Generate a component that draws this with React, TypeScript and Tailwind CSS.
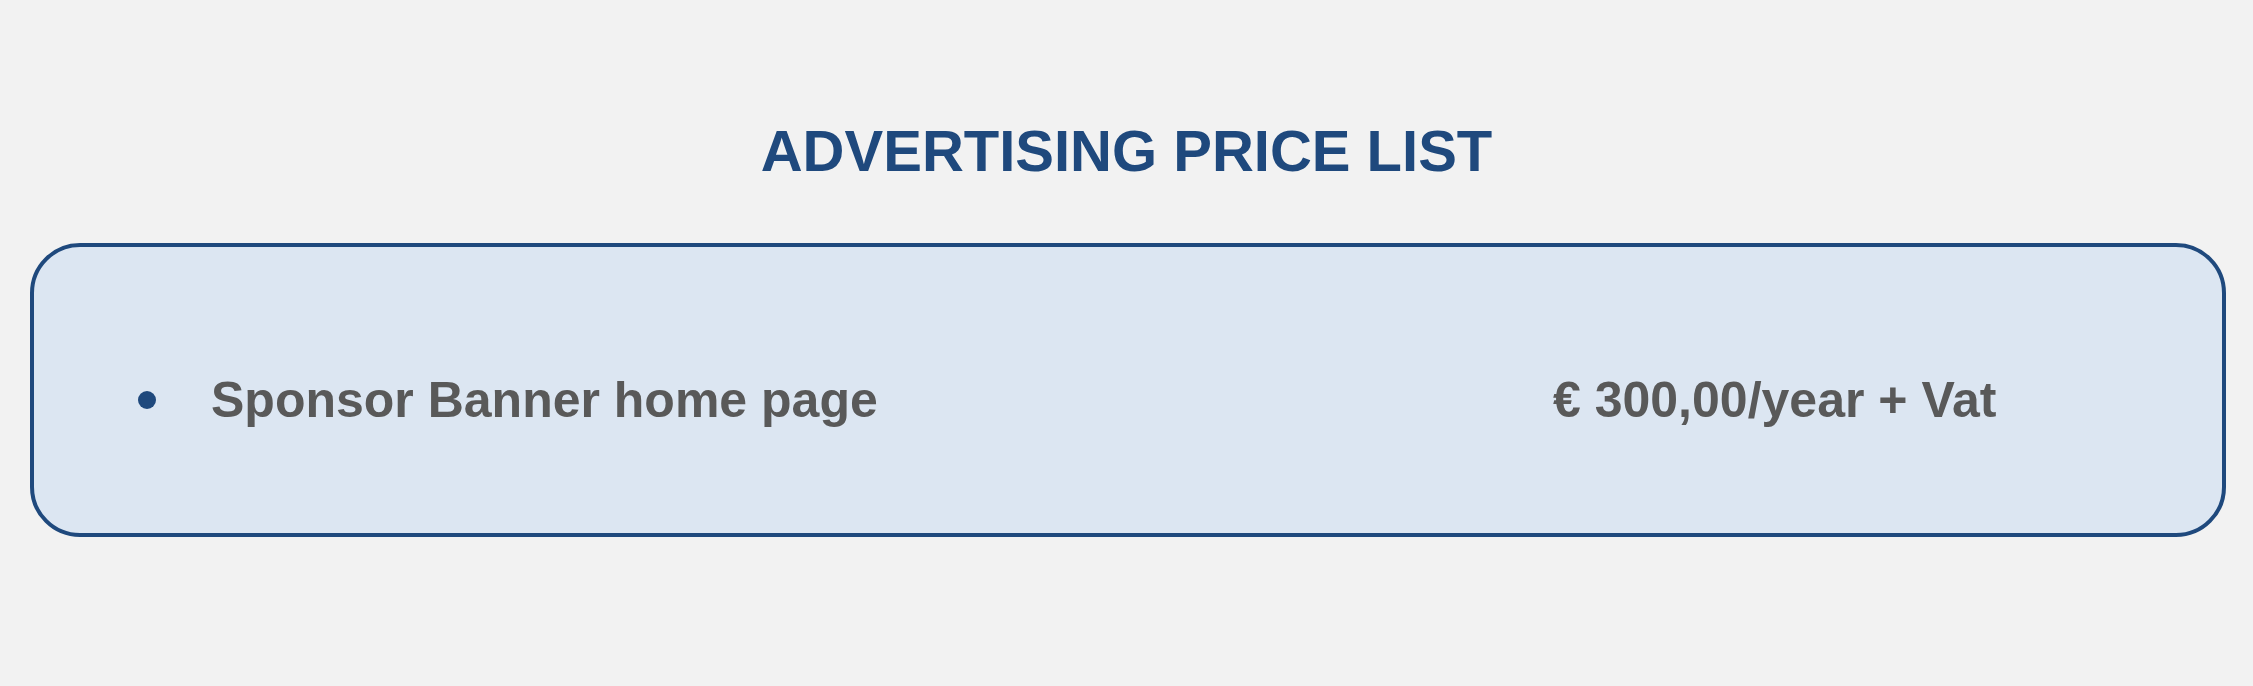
import React from "react";

// Advertising price list panel
const items = [{ label: "Sponsor Banner home page", price: "€ 300,00/year + Vat" }];

const App = () => {
  return (
    <div
      className="min-h-screen bg-[#f2f2f2] pt-[122px]"
      style={{ fontFamily: '"Liberation Sans", Arial, sans-serif' }}
    >
      <h1 className="text-center text-[58px] leading-none font-bold text-[#1f497d]">
        ADVERTISING PRICE LIST
      </h1>

      <div className="mt-[63px] ml-[30px] mr-[27px] h-[294px] rounded-[50px] border-4 border-[#1f497d] bg-[#dce6f2] pt-[128px]">
        {items.map((item) => (
          <div key={item.label} className="flex items-center">
            <div className="flex w-[1519px] items-center">
              <span className="ml-[104px] h-[18px] w-[18px] rounded-full bg-[#1f497d]"></span>
              <span className="ml-[55px] text-[50px] leading-none font-bold text-[#595959]">
                {item.label}
              </span>
            </div>
            <span className="text-[50px] leading-none font-bold text-[#595959]">
              {item.price}
            </span>
          </div>
        ))}
      </div>
    </div>
  );
};

export default App;
